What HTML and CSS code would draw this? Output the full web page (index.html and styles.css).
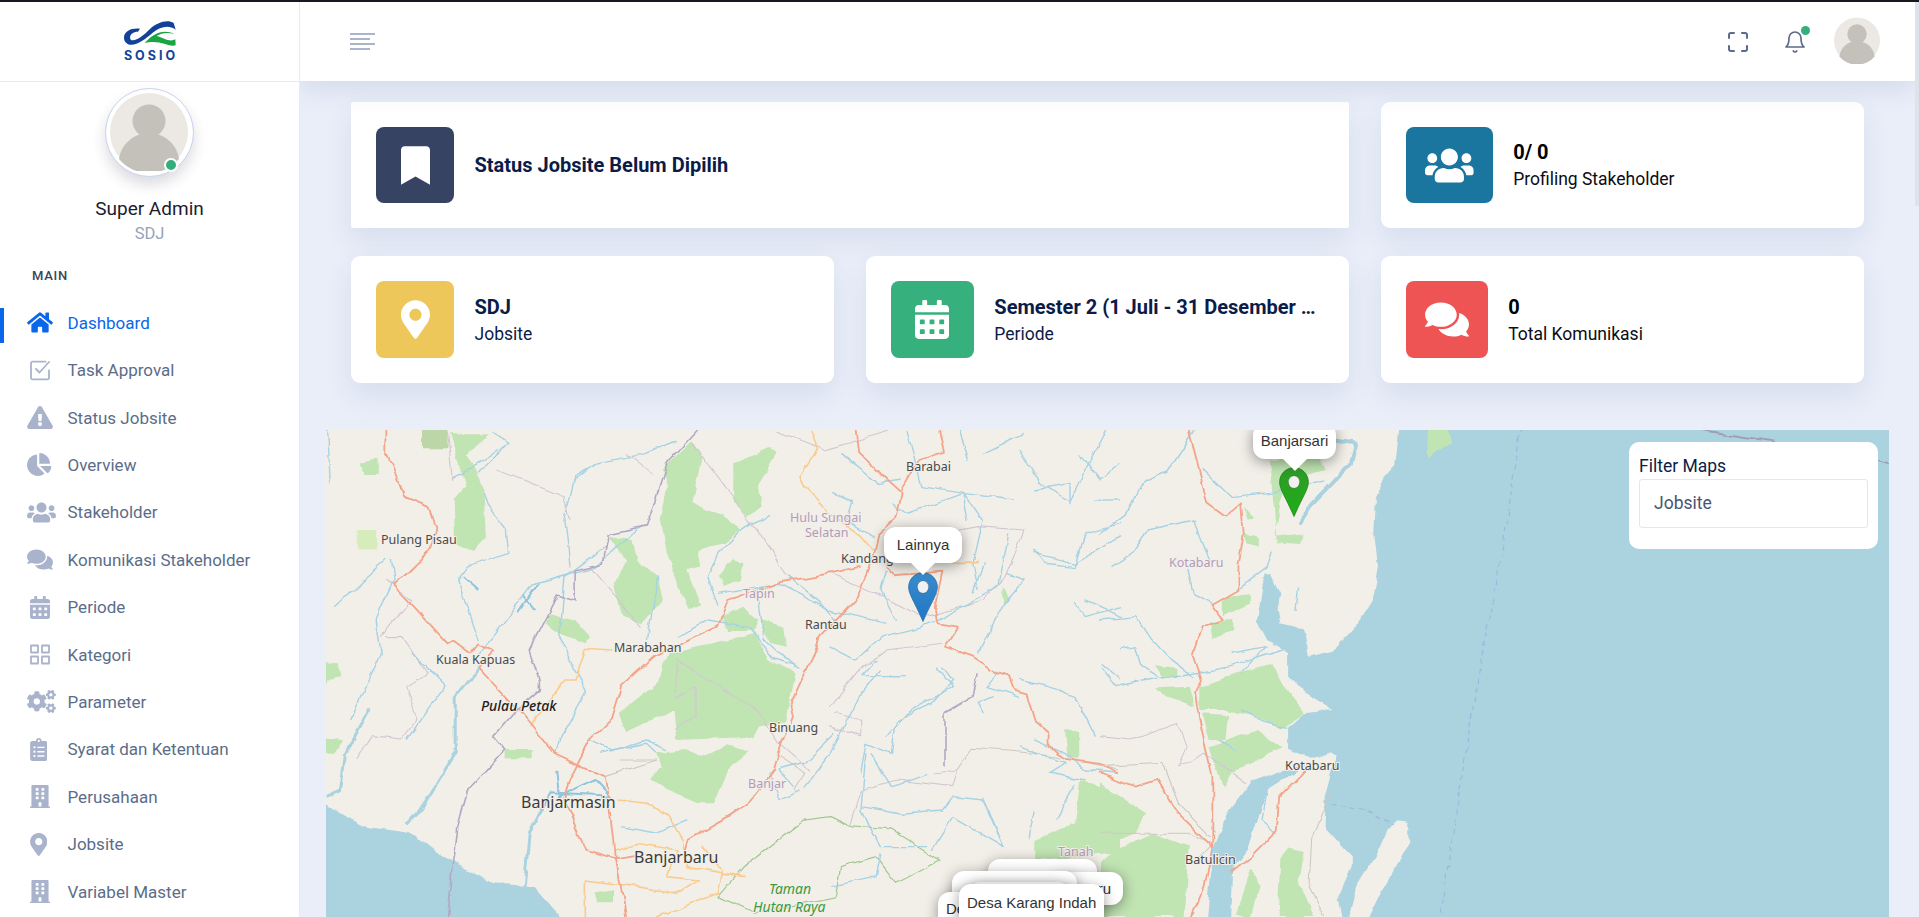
FILE: index.html
```html
<!DOCTYPE html>
<html lang="id">
<head>
<meta charset="utf-8">
<title>SOSIO Dashboard</title>
<link rel="stylesheet" href="styles.css">
</head>
<body>
<svg class="defs" width="0" height="0" aria-hidden="true">
  <defs>
    <symbol id="i-home" viewBox="0 0 576 512"><path d="M280.37 148.26L96 300.11V464a16 16 0 0 0 16 16l112.06-.29a16 16 0 0 0 15.92-16V368a16 16 0 0 1 16-16h64a16 16 0 0 1 16 16v95.64a16 16 0 0 0 16 16.05L464 480a16 16 0 0 0 16-16V300L295.67 148.26a12.19 12.19 0 0 0-15.3 0zM571.6 251.47L488 182.56V44.05a12 12 0 0 0-12-12h-56a12 12 0 0 0-12 12v72.61L318.47 43a48 48 0 0 0-61 0L4.34 251.47a12 12 0 0 0-1.6 16.9l25.5 31A12 12 0 0 0 45.15 301l235.22-193.74a12.19 12.19 0 0 1 15.3 0L530.9 301a12 12 0 0 0 16.9-1.6l25.5-31a12 12 0 0 0-1.7-16.93z"/></symbol>
    <symbol id="i-warn" viewBox="0 0 576 512"><path d="M569.517 440.013C587.975 472.007 564.806 512 527.94 512H48.054c-36.937 0-59.999-40.055-41.577-71.987L246.423 23.985c18.467-32.009 64.72-31.951 83.154 0l239.94 416.028zM288 354c-25.405 0-46 20.595-46 46s20.595 46 46 46 46-20.595 46-46-20.595-46-46-46zm-43.673-165.346l7.418 136c.347 6.364 5.609 11.346 11.982 11.346h48.546c6.373 0 11.635-4.982 11.982-11.346l7.418-136c.375-6.874-5.098-12.654-11.982-12.654h-63.383c-6.884 0-12.356 5.78-11.981 12.654z"/></symbol>
    <symbol id="i-pie" viewBox="0 0 544 512"><path d="M527.79 288H290.5l158.03 158.03c6.04 6.04 15.98 6.53 22.19.68 38.7-36.46 65.32-85.61 73.13-140.86 1.34-9.46-6.51-17.85-16.06-17.85zm-15.83-64.8C503.72 103.74 408.26 8.28 288.8.04 279.68-.59 272 7.1 272 16.24V240h223.77c9.14 0 16.82-7.68 16.19-16.8zM224 288V50.71c0-9.55-8.39-17.4-17.84-16.06C86.99 51.49-4.1 155.6.14 280.37 4.5 408.51 114.83 513.59 243.03 511.98c50.4-.63 96.97-16.87 135.26-44.03 7.9-5.6 8.42-17.23 1.57-24.08L224 288z"/></symbol>
    <symbol id="i-users" viewBox="0 0 640 512"><path d="M96 224c35.3 0 64-28.7 64-64s-28.7-64-64-64-64 28.7-64 64 28.7 64 64 64zm448 0c35.3 0 64-28.7 64-64s-28.7-64-64-64-64 28.7-64 64 28.7 64 64 64zm32 32h-64c-17.6 0-33.5 7.1-45.1 18.6 40.3 22.1 68.9 62 75.1 109.4h66c17.7 0 32-14.3 32-32v-32c0-35.3-28.7-64-64-64zm-256 0c61.9 0 112-50.1 112-112S381.9 32 320 32 208 82.1 208 144s50.1 112 112 112zm76.8 32h-8.3c-20.8 10-43.9 16-68.5 16s-47.6-6-68.5-16h-8.3C179.6 288 128 339.6 128 403.2V432c0 26.5 21.5 48 48 48h288c26.5 0 48-21.5 48-48v-28.8c0-63.6-51.6-115.2-115.2-115.2zm-223.7-13.4C161.5 263.1 145.6 256 128 256H64c-35.3 0-64 28.7-64 64v32c0 17.7 14.3 32 32 32h65.9c6.3-47.4 34.9-87.3 75.2-109.4z"/></symbol>
    <symbol id="i-chat" viewBox="0 0 576 512"><path d="M416 192c0-88.4-93.1-160-208-160S0 103.6 0 192c0 34.3 14.1 65.9 38 92-13.4 30.2-35.5 54.2-35.8 54.5-2.2 2.3-2.8 5.7-1.5 8.7S4.8 352 8 352c36.6 0 66.9-12.3 88.7-25 32.2 15.7 70.3 25 111.3 25 114.9 0 208-71.6 208-160zm122 220c23.9-26 38-57.7 38-92 0-66.9-53.5-124.2-129.3-148.1.9 6.6 1.3 13.3 1.3 20.1 0 105.9-107.7 192-240 192-10.8 0-21.3-.8-31.7-1.9C207.8 439.6 281.8 480 368 480c41 0 79.1-9.2 111.3-25 21.8 12.7 52.1 25 88.7 25 3.2 0 6.1-1.9 7.3-4.8 1.3-2.9.7-6.3-1.5-8.7-.3-.3-22.4-24.2-35.8-54.5z"/></symbol>
    <symbol id="i-cal" viewBox="0 0 448 512"><path d="M0 464c0 26.5 21.5 48 48 48h352c26.5 0 48-21.5 48-48V192H0v272zm320-196c0-6.6 5.4-12 12-12h40c6.6 0 12 5.4 12 12v40c0 6.6-5.4 12-12 12h-40c-6.6 0-12-5.4-12-12v-40zm0 128c0-6.6 5.4-12 12-12h40c6.6 0 12 5.4 12 12v40c0 6.6-5.4 12-12 12h-40c-6.6 0-12-5.4-12-12v-40zM192 268c0-6.6 5.4-12 12-12h40c6.6 0 12 5.4 12 12v40c0 6.6-5.4 12-12 12h-40c-6.6 0-12-5.4-12-12v-40zm0 128c0-6.6 5.4-12 12-12h40c6.6 0 12 5.4 12 12v40c0 6.6-5.4 12-12 12h-40c-6.6 0-12-5.4-12-12v-40zM64 268c0-6.6 5.4-12 12-12h40c6.6 0 12 5.4 12 12v40c0 6.6-5.4 12-12 12H76c-6.6 0-12-5.4-12-12v-40zm0 128c0-6.6 5.4-12 12-12h40c6.6 0 12 5.4 12 12v40c0 6.6-5.4 12-12 12H76c-6.6 0-12-5.4-12-12v-40zM400 64h-48V16c0-8.8-7.2-16-16-16h-32c-8.8 0-16 7.2-16 16v48H160V16c0-8.8-7.2-16-16-16h-32c-8.8 0-16 7.2-16 16v48H48C21.5 64 0 85.5 0 112v48h448v-48c0-26.5-21.5-48-48-48z"/></symbol>
    <symbol id="i-pin" viewBox="0 0 384 512"><path d="M172.268 501.67C26.97 291.031 0 268.413 0 192 0 85.961 85.961 0 192 0s192 85.961 192 192c0 76.413-26.97 99.031-172.268 309.67-9.535 13.774-29.93 13.773-39.464 0zM192 272c44.183 0 80-35.817 80-80s-35.817-80-80-80-80 35.817-80 80 35.817 80 80 80z"/></symbol>
    <symbol id="i-cogs" viewBox="0 0 640 512"><path d="M512.1 191l-8.2 14.3c-3 5.3-9.4 7.5-15.1 5.4-11.8-4.4-22.6-10.7-32.1-18.6-4.6-3.8-5.8-10.5-2.8-15.7l8.2-14.3c-6.9-8-12.3-17.3-15.9-27.4h-16.5c-6 0-11.2-4.3-12.2-10.3-2-12-2.1-24.6 0-37.1 1-6 6.2-10.4 12.2-10.4h16.5c3.6-10.1 9-19.4 15.9-27.4l-8.2-14.3c-3-5.2-1.9-11.9 2.8-15.7 9.5-7.9 20.4-14.2 32.1-18.6 5.7-2.1 12.1.1 15.1 5.4l8.2 14.3c10.5-1.9 21.2-1.9 31.7 0L552 6.3c3-5.3 9.4-7.5 15.1-5.4 11.8 4.4 22.6 10.7 32.1 18.6 4.6 3.8 5.8 10.5 2.8 15.7l-8.2 14.3c6.9 8 12.3 17.3 15.9 27.4h16.5c6 0 11.2 4.3 12.2 10.3 2 12 2.1 24.6 0 37.1-1 6-6.2 10.4-12.2 10.4h-16.5c-3.6 10.1-9 19.4-15.9 27.4l8.2 14.3c3 5.2 1.9 11.9-2.8 15.7-9.5 7.9-20.4 14.2-32.1 18.6-5.7 2.1-12.1-.1-15.1-5.4l-8.2-14.3c-10.4 1.9-21.2 1.9-31.7 0zm-10.5-58.8c38.5 29.6 82.4-14.3 52.8-52.8-38.5-29.7-82.4 14.3-52.8 52.8zM386.3 286.1l33.7 16.8c10.1 5.8 14.5 18.1 10.5 29.1-8.9 24.2-26.4 46.4-42.6 65.8-7.4 8.9-20.2 11.1-30.3 5.3l-29.1-16.8c-16 13.7-34.6 24.6-54.9 31.7v33.6c0 11.6-8.3 21.6-19.7 23.6-24.6 4.2-50.4 4.4-75.9 0-11.5-2-20-11.9-20-23.6V418c-20.3-7.2-38.9-18-54.9-31.7L74 403c-10 5.8-22.9 3.6-30.3-5.3-16.2-19.4-33.3-41.6-42.2-65.7-4-10.9.4-23.2 10.5-29.1l33.3-16.8c-3.9-20.9-3.9-42.4 0-63.4L12 205.8c-10.1-5.8-14.6-18.1-10.5-29 8.9-24.2 26-46.4 42.2-65.8 7.4-8.9 20.2-11.1 30.3-5.3l29.1 16.8c16-13.7 34.6-24.6 54.9-31.7V57.1c0-11.5 8.2-21.5 19.6-23.5 24.6-4.2 50.5-4.4 76-.1 11.5 2 20 11.9 20 23.6v33.6c20.3 7.2 38.9 18 54.9 31.7l29.1-16.8c10-5.8 22.9-3.6 30.3 5.3 16.2 19.4 33.2 41.6 42.1 65.8 4 10.9.1 23.2-10 29.1l-33.7 16.8c3.9 21 3.9 42.5 0 63.5zm-117.6 21.1c59.2-77-28.7-164.9-105.7-105.7-59.2 77 28.7 164.9 105.7 105.7zm243.4 182.7l-8.2 14.3c-3 5.3-9.4 7.5-15.1 5.4-11.8-4.4-22.6-10.7-32.1-18.6-4.6-3.8-5.8-10.5-2.8-15.7l8.2-14.3c-6.9-8-12.3-17.3-15.9-27.4h-16.5c-6 0-11.2-4.3-12.2-10.3-2-12-2.1-24.6 0-37.1 1-6 6.2-10.4 12.2-10.4h16.5c3.6-10.1 9-19.4 15.9-27.4l-8.2-14.3c-3-5.2-1.9-11.9 2.8-15.7 9.5-7.9 20.4-14.2 32.1-18.6 5.7-2.1 12.1.1 15.1 5.4l8.2 14.3c10.5-1.9 21.2-1.9 31.7 0l8.2-14.3c3-5.3 9.4-7.5 15.1-5.4 11.8 4.4 22.6 10.7 32.1 18.6 4.6 3.8 5.8 10.5 2.8 15.7l-8.2 14.3c6.9 8 12.3 17.3 15.9 27.4h16.5c6 0 11.2 4.3 12.2 10.3 2 12 2.1 24.6 0 37.1-1 6-6.2 10.4-12.2 10.4h-16.5c-3.6 10.1-9 19.4-15.9 27.4l8.2 14.3c3 5.2 1.9 11.9-2.8 15.7-9.5 7.9-20.4 14.2-32.1 18.6-5.7 2.1-12.1-.1-15.1-5.4l-8.2-14.3c-10.4 1.9-21.2 1.9-31.7 0zM501.6 431c38.5 29.6 82.4-14.3 52.8-52.8-38.5-29.6-82.4 14.3-52.8 52.8z"/></symbol>
    <symbol id="i-clip" viewBox="0 0 384 512"><path d="M336 64h-80c0-35.3-28.7-64-64-64s-64 28.7-64 64H48C21.5 64 0 85.5 0 112v352c0 26.5 21.5 48 48 48h288c26.5 0 48-21.5 48-48V112c0-26.5-21.5-48-48-48zM96 424c-13.3 0-24-10.7-24-24s10.7-24 24-24 24 10.7 24 24-10.7 24-24 24zm0-96c-13.3 0-24-10.7-24-24s10.7-24 24-24 24 10.7 24 24-10.7 24-24 24zm0-96c-13.3 0-24-10.7-24-24s10.7-24 24-24 24 10.7 24 24-10.7 24-24 24zm96-192c13.3 0 24 10.7 24 24s-10.7 24-24 24-24-10.7-24-24 10.7-24 24-24zm128 368c0 4.4-3.6 8-8 8H168c-4.4 0-8-3.6-8-8v-16c0-4.4 3.6-8 8-8h144c4.4 0 8 3.6 8 8v16zm0-96c0 4.4-3.6 8-8 8H168c-4.4 0-8-3.6-8-8v-16c0-4.4 3.6-8 8-8h144c4.4 0 8 3.6 8 8v16zm0-96c0 4.4-3.6 8-8 8H168c-4.4 0-8-3.6-8-8v-16c0-4.4 3.6-8 8-8h144c4.4 0 8 3.6 8 8v16z"/></symbol>
    <symbol id="i-bld" viewBox="0 0 448 512"><path d="M436 480h-20V24c0-13.255-10.745-24-24-24H56C42.745 0 32 10.745 32 24v456H12c-6.627 0-12 5.373-12 12v20h448v-20c0-6.627-5.373-12-12-12zM128 76c0-6.627 5.373-12 12-12h40c6.627 0 12 5.373 12 12v40c0 6.627-5.373 12-12 12h-40c-6.627 0-12-5.373-12-12V76zm0 96c0-6.627 5.373-12 12-12h40c6.627 0 12 5.373 12 12v40c0 6.627-5.373 12-12 12h-40c-6.627 0-12-5.373-12-12v-40zm52 148h-40c-6.627 0-12-5.373-12-12v-40c0-6.627 5.373-12 12-12h40c6.627 0 12 5.373 12 12v40c0 6.627-5.373 12-12 12zm76 160h-64v-84c0-6.627 5.373-12 12-12h40c6.627 0 12 5.373 12 12v84zm64-172c0 6.627-5.373 12-12 12h-40c-6.627 0-12-5.373-12-12v-40c0-6.627 5.373-12 12-12h40c6.627 0 12 5.373 12 12v40zm0-96c0 6.627-5.373 12-12 12h-40c-6.627 0-12-5.373-12-12v-40c0-6.627 5.373-12 12-12h40c6.627 0 12 5.373 12 12v40zm0-96c0 6.627-5.373 12-12 12h-40c-6.627 0-12-5.373-12-12V76c0-6.627 5.373-12 12-12h40c6.627 0 12 5.373 12 12v40z"/></symbol>
    <symbol id="i-mark" viewBox="0 0 384 512"><path d="M0 512V48C0 21.49 21.49 0 48 0h288c26.51 0 48 21.49 48 48v464L192 400 0 512z"/></symbol>
    <symbol id="i-user" viewBox="0 0 78 78"><circle cx="39" cy="39" r="39" fill="#ece9e4"/><circle cx="39" cy="28" r="16.5" fill="#c4c1bb"/><path d="M9 66c2-15 15-26 30-26s28 11 30 26a39 39 0 0 1-60 0z" fill="#c4c1bb"/></symbol>
    <linearGradient id="g-blue" x1="0" y1="0" x2="0" y2="1"><stop offset="0" stop-color="#3a8ccb"/><stop offset="1" stop-color="#2076c4"/></linearGradient>
    <linearGradient id="g-green" x1="0" y1="0" x2="0" y2="1"><stop offset="0" stop-color="#2e9c28"/><stop offset="1" stop-color="#1fae17"/></linearGradient>
    <filter id="organic" x="0" y="0" width="100%" height="100%" color-interpolation-filters="sRGB">
      <feTurbulence type="fractalNoise" baseFrequency=".045" numOctaves="3" seed="4" result="n"/>
      <feDisplacementMap in="SourceGraphic" in2="n" scale="7" xChannelSelector="R" yChannelSelector="G" result="d"/>
      <feGaussianBlur in="d" stdDeviation=".45"/>
    </filter>
  </defs>
</svg>

<div class="app">
  <aside class="sidebar">
    <div class="brand">
      <div class="logo">
        <svg class="logo-mark" viewBox="372 62 156 75">
          <path class="logo-blue" d="M372 112C372 92 395 82 420 85L414 94C396 94 386 106 392 118C405 126 430 106 450 86C470 67 502 56 521 68L527 88C505 72 480 80 460 96C435 118 410 136 390 133C378 131 372 122 372 112Z"/>
          <path class="logo-green" d="M434 128C458 100 490 84 524 101C500 95 484 98 470 107C490 112 510 127 526 117L527 135C505 141 480 116 434 128Z"/>
        </svg>
        <span class="logo-text">SOSIO</span>
      </div>
    </div>
    <div class="profile">
      <div class="profile-pic">
        <svg class="profile-img"><use href="#i-user"/></svg>
        <span class="profile-dot"></span>
      </div>
      <div class="profile-name">Super Admin</div>
      <div class="profile-role">SDJ</div>
    </div>
    <div class="nav-title">MAIN</div>
    <nav class="nav">
      <a class="nav-item is-active"><span class="nav-icon"><svg class="w26"><use href="#i-home"/></svg></span>Dashboard</a>
      <a class="nav-item"><span class="nav-icon"><svg class="w20 inset" viewBox="0 0 20 20"><path class="outline" d="M15.5 1.2H2.6A1.6 1.6 0 0 0 1 2.8v14.4a1.6 1.6 0 0 0 1.6 1.6h14.8a1.6 1.6 0 0 0 1.6-1.6V10"/><path class="outline" d="M6 8.5l3.5 3.5L19 1.5"/></svg></span>Task Approval</a>
      <a class="nav-item"><span class="nav-icon"><svg class="w26"><use href="#i-warn"/></svg></span>Status Jobsite</a>
      <a class="nav-item"><span class="nav-icon"><svg class="w24"><use href="#i-pie"/></svg></span>Overview</a>
      <a class="nav-item"><span class="nav-icon"><svg class="w29"><use href="#i-users"/></svg></span>Stakeholder</a>
      <a class="nav-item"><span class="nav-icon"><svg class="w26"><use href="#i-chat"/></svg></span>Komunikasi Stakeholder</a>
      <a class="nav-item"><span class="nav-icon"><svg class="w20 inset"><use href="#i-cal"/></svg></span>Periode</a>
      <a class="nav-item"><span class="nav-icon"><svg class="w20 inset" viewBox="0 0 20 20"><path class="outline" d="M1 1h7v7H1zM12 1h7v7h-7zM1 12h7v7H1zM12 12h7v7h-7z"/></svg></span>Kategori</a>
      <a class="nav-item"><span class="nav-icon"><svg class="w29"><use href="#i-cogs"/></svg></span>Parameter</a>
      <a class="nav-item"><span class="nav-icon"><svg class="w18 inset"><use href="#i-clip"/></svg></span>Syarat dan Ketentuan</a>
      <a class="nav-item"><span class="nav-icon"><svg class="w20 inset"><use href="#i-bld"/></svg></span>Perusahaan</a>
      <a class="nav-item"><span class="nav-icon"><svg class="w18 inset"><use href="#i-pin"/></svg></span>Jobsite</a>
      <a class="nav-item"><span class="nav-icon"><svg class="w20 inset"><use href="#i-bld"/></svg></span>Variabel Master</a>
    </nav>
  </aside>

  <main class="main">
    <header class="header">
      <div class="burger"><i class="long"></i><i></i><i class="long"></i><i></i></div>
      <div class="header-actions">
        <svg class="h-full" viewBox="0 0 20 20"><path d="M1 6V3a2 2 0 0 1 2-2h3M14 1h3a2 2 0 0 1 2 2v3M19 14v3a2 2 0 0 1-2 2h-3M6 19H3a2 2 0 0 1-2-2v-3"/></svg>
        <div class="h-bell">
          <svg viewBox="0 0 24 24"><path d="M18 8A6 6 0 0 0 6 8c0 7-3 9-3 9h18s-3-2-3-9"/><path d="M13.7 21a2 2 0 0 1-3.4 0"/></svg>
          <span class="h-dot"></span>
        </div>
        <svg class="h-avatar"><use href="#i-user"/></svg>
      </div>
    </header>

    <div class="content">
      <section class="cards">
        <div class="card card-wide">
          <div class="tile tile-navy"><svg class="glyph g29"><use href="#i-mark"/></svg></div>
          <div class="card-text"><div class="card-title navy">Status Jobsite Belum Dipilih</div></div>
        </div>
        <div class="card">
          <div class="tile tile-teal"><svg class="glyph g48"><use href="#i-users"/></svg></div>
          <div class="card-text"><div class="card-title">0/ 0</div><div class="card-sub">Profiling Stakeholder</div></div>
        </div>
        <div class="card">
          <div class="tile tile-yellow"><svg class="glyph g29"><use href="#i-pin"/></svg></div>
          <div class="card-text"><div class="card-title navy">SDJ</div><div class="card-sub navy">Jobsite</div></div>
        </div>
        <div class="card">
          <div class="tile tile-green"><svg class="glyph g34"><use href="#i-cal"/></svg></div>
          <div class="card-text"><div class="card-title navy">Semester 2 (1 Juli - 31 Desember 2024)</div><div class="card-sub navy">Periode</div></div>
        </div>
        <div class="card">
          <div class="tile tile-red"><svg class="glyph g44"><use href="#i-chat"/></svg></div>
          <div class="card-text"><div class="card-title">0</div><div class="card-sub">Total Komunikasi</div></div>
        </div>
      </section>

      <section class="map">
        <svg class="map-art" viewBox="326 430 1564 487" preserveAspectRatio="none">
          <rect class="land" x="326" y="430" width="1564" height="487"/>
          <g class="soft">
            <g transform="translate(320 420) scale(.5102 .3333)">
              <path class="sea" d="M-20 1135L90 1220L180 1240L230 1300L340 1390L420 1400L500 1540L-20 1540Z"/>
              <g class="forest">
                <path d="M255 40L330 40L290 110L320 200L325 350L300 390L265 370L262 240L285 200Z"/>
                <path class="tile-dark" d="M200 30H250V85H200Z"/>
                <path d="M80 125L115 115V165H85Z"/>
                <path class="pale" d="M72 330H110V385H72Z"/>
                <path d="M0 725L35 730L40 770L0 800Z"/>
                <path d="M0 955L45 960L30 1000L0 1010Z"/>
                <path d="M730 60L750 110L730 250L790 290L825 330L790 370L740 390L745 440L720 450L745 560L725 570L700 480L680 400L668 300L680 200L670 150Z"/>
                <path d="M880 80L895 100L860 190L865 260L840 290L810 240L810 130Z"/>
                <path d="M565 350L610 360L620 420L660 470L670 540L630 610L590 580L575 500L600 420Z"/>
                <path d="M810 420L830 430L825 480L790 500L780 470Z"/>
                <path d="M450 580L500 600L530 650L520 670L470 640L440 610Z"/>
                <path d="M785 590L830 560L860 600L850 630L800 630Z"/>
                <path d="M865 600L910 620L915 680L885 670L865 630Z"/>
                <path d="M690 700L850 640L880 720L930 760L925 800L910 900L860 920L850 950L700 960L695 870L600 940L585 880L660 790L670 730Z"/>
                <path d="M660 1000L720 990L750 1010L800 970L840 990L800 1040L790 1080L770 1150L740 1150L680 1110L645 1080L670 1040Z"/>
                <path d="M360 990H415V1015H360Z"/>
                <path d="M1490 1080L1568 1130V1300L1400 1320V1260L1480 1210Z"/>
                <path d="M1460 925L1490 940V1020L1465 1015Z"/>
                <path d="M1340 500L1350 530L1338 560Z"/>
                <path d="M540 1420L575 1410L570 1450L545 1450Z"/>
              </g>
              <g class="boundary">
                <path d="M350 150L480 230L490 300"/><path d="M530 440L630 620"/><path d="M700 720L850 860L900 970L960 1050"/>
                <path d="M730 70L890 400L915 470"/><path d="M700 730V830L735 800V890L695 930"/>
                <path d="M890 30L990 90L1120 30"/><path d="M1000 460L1090 520L1180 590L1300 540L1340 480L1380 330L1290 320L1220 340"/>
                <path d="M130 650L160 650L210 760L170 800L190 900L160 960L100 950L70 1020"/><path d="M1000 860L1050 760L1110 690L1220 670"/>
                <path d="M1010 880L1060 900L1060 950L1000 920"/><path d="M600 100L650 160"/><path d="M1200 1060L1250 1050L1240 1100L1130 1080L1060 1110L1040 1220"/>
                <path d="M250 40L260 180"/><path d="M120 650L180 540L130 480"/>
              </g>
              <g class="greyroad">
                <path d="M1250 1050L1280 985L1400 1000L1568 1050"/><path d="M900 1010L950 1060L930 1110"/><path d="M590 1020L660 1020L560 1070"/>
              </g>
              <g class="park"><path d="M830 1340L950 1200L1000 1190L1040 1220L1120 1230L1215 1320L1130 1390L1090 1310L1020 1340L1010 1430L850 1480L780 1430L830 1340"/></g>
              <g class="river">
                <path d="M340 40L370 70L310 160"/><path d="M320 220L330 260L365 330L370 400L290 440L270 480L300 620L310 660"/>
                <path d="M140 420L145 480L130 530L110 600L120 700L60 900"/><path d="M490 460L420 490L340 650L300 720"/>
                <path d="M500 180L540 130L640 100L700 60"/><path d="M560 380L480 470L470 650L520 820L470 950L460 1000"/>
                <path d="M1000 680L1050 720L1100 650L1180 620L1210 600L1330 500L1350 340"/><path d="M1110 450L1100 510L1130 600"/>
                <path d="M1500 540L1568 590"/><path d="M1010 210L1040 250L1030 300L1085 350"/><path d="M1260 220L1360 240"/><path d="M1370 90L1410 190L1470 240L1540 30"/>
                <path d="M1070 1000L1060 1170L1100 1280L1190 1280"/><path d="M1100 750L1060 820L1000 1000L950 1100"/>
                <path d="M1150 30L1180 200L1260 220L1300 300L1280 430L1290 510"/><path d="M1400 400L1480 430L1568 350"/><path d="M1210 740L1240 800L1150 880L1110 950"/>
                <path d="M1530 730L1568 780"/><path d="M1320 830L1290 850L1300 880"/><path d="M1370 980L1460 1030L1430 1060L1500 1080"/>
                <path d="M1120 770L1150 770"/><path d="M550 1000L640 960L680 990"/><path d="M700 650L760 600L840 620L890 720L940 745"/>
                <path d="M780 520L900 490L1000 570L1110 610"/><path d="M1300 1130L1340 1280L1240 1190L1200 1290"/><path d="M1400 1170L1390 1250"/>
                <path d="M15 30L20 190"/><path d="M540 130L500 170L480 300L490 440"/><path d="M630 320L540 440L420 490"/><path d="M660 470L640 660"/>
                <path d="M880 280L820 340L780 400L760 470L780 560"/><path d="M920 470L990 560L1030 630"/><path d="M860 540L870 660L930 745"/>
                <path d="M1120 250L1150 280L1260 220L1270 300"/><path d="M1300 430L1280 520"/><path d="M1400 210L1470 190L1470 250"/>
                <path d="M1400 390L1420 430L1480 440L1500 340L1568 310"/><path d="M1290 700L1340 550L1380 480L1345 460"/><path d="M1480 550L1500 590L1568 560"/>
                <path d="M1090 720L1060 770L1140 770"/><path d="M1220 740L1240 780L1200 850L1130 900L1120 1000L1070 970L1060 1060"/>
                <path d="M1060 1160L1140 1180L1220 1170L1240 1130L1300 1140L1340 1280"/><path d="M1400 960L1460 1000L1500 1050L1568 1060"/>
                <path d="M1100 1300L1090 1370L1000 1400"/><path d="M1330 760L1310 800L1370 830"/><path d="M1520 950L1480 830L1430 800L1370 780"/>
                <path d="M530 960L570 990L640 970L660 1000"/><path d="M930 1100L900 1050L950 1030L1010 940"/><path d="M590 1220L660 1240L720 1200"/>
                <path d="M1270 120L1250 30"/><path d="M1300 100L1380 40"/><path d="M1490 100L1530 180L1568 130"/><path d="M1020 100L1095 190L1140 180"/>
                <path d="M880 1060L900 1140L940 1110"/><path d="M1520 240L1568 240"/><path d="M1440 1200L1480 1090"/><path d="M30 560L85 480L130 420"/>
                <path d="M180 700L245 800L170 960"/><path d="M350 90L300 140L260 170"/><path d="M1190 1060L1120 1100L1080 1000"/>
              </g>
              <path class="river-wide" d="M100 860L50 1000L40 1110L10 1130"/>
              <path class="river-wide" d="M310 740L265 830L265 1000L190 1180L170 1215"/>
              <path class="river-wide" d="M440 1150L410 1240L400 1400L370 1491"/>
              <path class="river-dense" d="M465 1050L470 1130L540 1080L570 1130L450 1120L430 1170"/>
              <path class="river-dense" d="M390 580L430 490M400 530L420 570M280 470L310 510"/>
              <path class="border-river" d="M740 30L680 130L640 320L565 345L555 430L500 450L500 540L465 525L440 600L410 690L430 780L430 810L385 870L340 950L360 990L290 1110L270 1220L250 1491"/>
              <path class="border-river" d="M1290 760L1280 830L1225 880L1225 1040"/>
              <g class="minor">
                <path d="M960 30L975 90L940 170L950 200L1000 280L1060 345L1085 390"/><path d="M520 685L575 690"/><path d="M520 685L500 780L480 780L410 920"/>
                <path d="M585 1140L640 1150L680 1180L710 1260L720 1340L830 1370"/><path d="M580 1290L620 1270L700 1290L680 1370L740 1380L700 1420L620 1400L520 1380L520 1491"/>
                <path d="M750 1280L790 1350L780 1420L660 1491"/><path d="M1225 430L1290 425"/>
              </g>
              <g class="road">
                <path d="M130 30V100L150 170L165 230L215 262L230 330L215 390L145 495L250 670L260 660L295 700L310 670L340 695L310 740L390 870L460 1000L560 1070L570 1170L580 1315"/>
                <path d="M1050 30L1055 100L1090 150L1140 220L1130 290L1095 340L1085 410L1050 540L980 650L965 710L920 860L925 890L905 970L890 1050L840 1150L800 1190L720 1260L715 1290"/>
                <path d="M1215 30L1225 95L1175 120L1140 215"/>
                <path d="M1110 440L1130 465L1220 455L1205 560L1210 610L1250 620L1225 680L1280 710L1330 760L1350 770L1360 810L1385 820L1400 900L1430 940L1430 980L1460 1020L1530 1035L1568 1060"/>
                <path d="M1060 440L1000 460L890 490L800 540L780 620L710 670L655 710L590 800L570 900L530 960L490 1080L480 1140L520 1290L580 1315L620 1305"/>
                <path d="M580 1315L600 1491"/>
              </g>
            </g>
            <g transform="translate(1100 420) scale(.5225 .3333)">
              <path class="sea" d="M575 0L565 135L545 170L528 240L525 340L532 440L520 545L490 620L450 690L400 712L392 640L388 625L345 610L340 570L345 520L325 460L315 460L305 560L300 600L320 660L360 700L360 770L390 820L445 870L390 880L360 920L360 990L400 1015L440 995L455 1010L445 1040L430 1130L428 1220L480 1310L480 1350L455 1440L470 1540H1560V0Z"/>
              <path class="sea" d="M395 1030L360 1045L290 1085L245 1180L215 1285L200 1540H250L255 1345L285 1285L320 1110L370 1060Z"/>
              <path class="land" d="M565 1200L590 1205L590 1270L560 1360L530 1440L500 1540H470L490 1400L530 1300L550 1230Z"/>
              <path class="sea-line" d="M440 60L490 70L480 130L400 260L380 310"/>
              <g class="forest">
                <path d="M325 120L420 110L430 150L360 180L345 250L335 350L390 340L385 375L340 370L335 260Z"/>
                <path d="M625 20H665L670 70L630 115Z"/><path d="M275 260L295 290L285 300Z"/><path d="M275 340L300 350V380L280 370Z"/>
                <path d="M235 530L285 520V555L235 590Z"/><path d="M210 605L255 600V635L215 660Z"/><path d="M105 735L150 745V770H120Z"/>
                <path d="M190 800L240 770L330 730L365 830L390 880L350 920L300 890L240 870L190 870Z"/><path d="M105 805L170 800L180 860L130 830Z"/>
                <path d="M195 880L245 885L240 960H210Z"/><path d="M210 980L300 930L350 985L310 1010L250 1060L235 1100L215 1010Z"/>
                <path d="M0 1090L90 1180L70 1240L0 1280Z"/><path d="M30 1290L100 1240L170 1280L160 1491H0V1330Z"/>
                <path d="M360 1280L390 1290L380 1380L410 1491H340L345 1320Z"/><path d="M290 1340L305 1400L290 1491H260Z"/>
              </g>
              <g class="boundary"><path d="M0 950L60 960L150 910L165 980L150 1040L200 1000L280 1090"/></g>
              <g class="greyroad"><path d="M0 1040L120 1030L150 1150L210 1250"/><path d="M0 1240H90L170 1240L215 1270L185 1320"/><path d="M440 1120L405 1260L400 1400L430 1491"/></g>
              <g class="river">
                <path d="M180 30L130 150L85 180L50 280L0 340"/><path d="M195 145L250 230L340 215L430 180"/><path d="M0 600L70 590L100 660L130 710L180 770"/>
                <path d="M40 690L70 680L80 740L110 770"/><path d="M0 740L30 800L90 780L180 760L250 740L350 690"/><path d="M20 440L60 400L90 330L180 300L190 350L210 430"/>
                <path d="M270 870L310 900L360 920"/><path d="M170 450L180 520L215 550"/><path d="M330 390L320 440L260 510"/><path d="M380 500L375 570"/><path d="M230 960L260 1000"/>
                <path d="M250 700L320 680L270 760"/><path d="M320 1110L310 1200L340 1240"/>
              </g>
              <g class="road">
                <path d="M170 30L190 150L205 250L240 290L270 250L275 340L265 440L265 510L215 555L235 600L195 620L178 700L195 780L182 820L190 900L215 1070L215 1280L200 1400L175 1491"/>
                <path d="M0 1060L70 1100L110 1080L150 1180L215 1280"/><path d="M395 1050L345 1130L340 1230L290 1310L250 1360"/>
              </g>
              <path class="dash" d="M805 0L780 300L720 800L650 1491"/>
              <path class="dash" d="M445 1150L510 1170L560 1215"/>
              <path class="border-line" d="M1150 30L1290 65M1490 120L1512 130"/>
            </g>
          </g>
          <g class="labels">
            <text class="lb" x="381" y="544">Pulang Pisau</text>
            <text class="lb" x="436" y="664">Kuala Kapuas</text>
            <text class="lb lb-it" x="481" y="711">Pulau Petak</text>
            <text class="lb" x="614" y="652">Marabahan</text>
            <text class="lb" x="805" y="629">Rantau</text>
            <text class="lb" x="769" y="732">Binuang</text>
            <text class="lb lb-big" x="521" y="808">Banjarmasin</text>
            <text class="lb lb-big" x="634" y="863">Banjarbaru</text>
            <text class="lb" x="841" y="563">Kandangan</text>
            <text class="lb" x="906" y="471">Barabai</text>
            <text class="lb lb-ad" x="790" y="522">Hulu Sungai</text>
            <text class="lb lb-ad" x="805" y="537">Selatan</text>
            <text class="lb lb-ad" x="743" y="598">Tapin</text>
            <text class="lb lb-ad" x="748" y="788">Banjar</text>
            <text class="lb lb-ad" x="1058" y="856">Tanah</text>
            <text class="lb lb-ad" x="1169" y="567">Kotabaru</text>
            <text class="lb" x="1285" y="770">Kotabaru</text>
            <text class="lb" x="1185" y="864">Batulicin</text>
            <text class="lb lb-park" x="769" y="894">Taman</text>
            <text class="lb lb-park" x="753" y="912">Hutan Raya</text>
          </g>
        </svg>

        <svg class="pin pin-blue" viewBox="0 0 30 50"><path d="M15 .6C7 .6 .6 7.2 .6 15C.6 22 5 27 15 49.5C25 27 29.4 22 29.4 15C29.4 7.2 23 .6 15 .6Z"/><ellipse class="pin-eye" cx="15" cy="15" rx="5.6" ry="6.2"/></svg>
        <svg class="pin pin-green" viewBox="0 0 30 50"><path d="M15 .6C7 .6 .6 7.2 .6 15C.6 22 5 27 15 49.5C25 27 29.4 22 29.4 15C29.4 7.2 23 .6 15 .6Z"/><ellipse class="pin-eye" cx="15" cy="15" rx="5.6" ry="6.2"/></svg>

        <div class="pop pop-banjarsari">Banjarsari</div>
        <div class="pop pop-lainnya">Lainnya</div>
        <div class="pop pop-a">&nbsp;</div>
        <div class="pop pop-b">Desa Batu Baru</div>
        <div class="pop pop-c">Desa Pantai</div>
        <div class="pop pop-d">&nbsp;</div>
        <div class="pop pop-e">Desa Sungai</div>
        <div class="pop pop-f">Desa Karang Indah</div>

        <div class="filter">
          <label class="filter-label">Filter Maps</label>
          <div class="filter-input">Jobsite</div>
        </div>
      </section>
    </div>
  </main>
  <div class="scrollbar"><span class="thumb"></span></div>
</div>
</body>
</html>
```
FILE: styles.css
```css
* { box-sizing: border-box; }
html, body { margin: 0; height: 100%; overflow: hidden; }
body { font-family: Roboto, "Liberation Sans", sans-serif; background: #e9eef9; color: #0b1c48; }
.defs { position: absolute; }

.app { display: flex; height: 917px; border-top: 2px solid #17171f; overflow: hidden; }

/* sidebar */
.sidebar { width: 300px; flex: none; background: #fff; border-right: 1px solid #e8eaf1; overflow: hidden; position: relative; z-index: 3; }
.brand { height: 80px; border-bottom: 1px solid #e8eaf1; display: flex; justify-content: center; align-items: flex-start; padding-top: 19px; }
.logo { width: 52px; display: flex; flex-direction: column; align-items: center; }
.logo-mark { width: 52px; height: 25px; display: block; }
.logo-blue { fill: #12419a; }
.logo-green { fill: #1aa442; }
.logo-text { font: 700 12.5px/12px Inter, "Liberation Sans", sans-serif; letter-spacing: 3px; color: #12419a; margin: 4px -3px 0 0; }

.profile { display: flex; flex-direction: column; align-items: center; padding-top: 6px; }
.profile-pic { width: 89px; height: 89px; border-radius: 50%; border: 1.5px solid #c7d2ec; background: #fff; padding: 4px; position: relative; box-shadow: 0 8px 14px rgba(40, 40, 60, .16); }
.profile-img { width: 78px; height: 78px; display: block; }
.profile-dot { position: absolute; left: 58px; top: 69px; width: 14px; height: 14px; border-radius: 50%; background: #34ae7c; border: 2px solid #fff; }
.profile-name { font-size: 19px; line-height: 24px; color: #1c1c2e; margin-top: 20px; }
.profile-role { font-size: 16.5px; line-height: 20px; color: #98a2b8; margin-top: 3px; }
.nav-title { font-size: 13px; line-height: 16px; font-weight: 500; letter-spacing: .7px; color: #3c4459; padding-left: 32px; margin-top: 24px; }

.nav { margin-top: 15px; }
.nav-item { height: 47.42px; display: flex; align-items: center; position: relative; font-size: 17px; color: #5b6d8a; }
.nav-item.is-active { color: #0a66ea; }
.nav-item.is-active::before { content: ""; position: absolute; left: 0; top: 8.5px; width: 4px; height: 35px; background: #0a66ea; }
.nav-icon { width: 67.5px; flex: none; padding-left: 27px; display: flex; align-items: center; color: #a9b3cb; }
.nav-item.is-active .nav-icon { color: #0a66ea; }
.nav-icon svg { height: 23px; display: block; fill: currentColor; }
.w18 { width: 17.5px; } .w20 { width: 20px; } .w24 { width: 24.5px; } .w26 { width: 26px; } .w29 { width: 29px; }
.inset { margin-left: 2.5px; }
.outline { fill: none; stroke: currentColor; stroke-width: 1.8; stroke-linecap: round; stroke-linejoin: round; }

/* main */
.main { flex: 1; min-width: 0; display: flex; flex-direction: column; overflow: hidden; }
.header { height: 79px; flex: none; background: #fff; display: flex; align-items: center; justify-content: space-between; padding: 0 35px 0 50px; position: relative; z-index: 2; box-shadow: 0 8px 24px rgba(60, 80, 130, .12); }
.burger { width: 25px; display: flex; flex-direction: column; gap: 3.3px; margin-top: 6px; transform: translateY(-3px); }
.burger i { display: block; height: 2px; width: 20px; background: #aab4cf; }
.burger i.long { width: 25px; }
.header-actions { display: flex; align-items: center; }
.h-full { width: 20px; height: 20px; fill: none; stroke: #5b6b88; stroke-width: 2; stroke-linecap: round; margin-right: 35px; margin-top: 1px; }
.h-bell { position: relative; width: 24px; height: 26px; margin-right: 27px; }
.h-bell svg { width: 24px; height: 26px; display: block; fill: none; stroke: #5b6b88; stroke-width: 1.7; stroke-linecap: round; stroke-linejoin: round; }
.h-dot { position: absolute; right: -3px; top: -3px; width: 9px; height: 9px; border-radius: 50%; background: #34ae7c; }
.h-avatar { width: 46px; height: 47px; display: block; margin-top: -2px; }

.content { flex: 1; min-height: 0; padding: 21px 26px 0; display: flex; flex-direction: column; }
.cards { display: grid; grid-template-columns: repeat(3, 483.33px); grid-template-rows: 126px 127px; gap: 28px 31.5px; margin: 0 25px; }
.card { background: #fff; border-radius: 9px; padding: 25px; display: flex; align-items: center; min-width: 0; box-shadow: 0 12px 28px rgba(60, 80, 130, .1); }
.card-wide { grid-column: span 2; border-radius: 2px; }
.tile { flex: none; height: 76px; border-radius: 8px; display: flex; align-items: center; justify-content: center; color: #fff; }
.card:nth-child(n+3) .tile { height: 77px; }
.tile-navy { width: 78px; background: #364362; }
.tile-teal { width: 87px; background: #1a769e; }
.tile-yellow { width: 78px; background: #edc759; }
.tile-green { width: 83px; background: #36b07c; }
.tile-red { width: 82px; background: #ef5454; }
.glyph { height: 39px; display: block; fill: currentColor; }
.g29 { width: 29px; } .g34 { width: 34px; } .g44 { width: 44px; } .g48 { width: 48.75px; }
.card-text { margin-left: 20.5px; min-width: 0; flex: 1; }
.card-title { font-size: 20px; line-height: 24px; font-weight: 700; color: #000; white-space: nowrap; overflow: hidden; text-overflow: ellipsis; }
.card-sub { font-size: 17.5px; line-height: 22px; font-weight: 400; color: #0c0c14; margin-top: 4px; }
.navy { color: #0b1c48; }

/* map */
.map { flex: 1; min-height: 0; margin-top: 47px; position: relative; overflow: hidden; }
.map-art { position: absolute; left: 0; top: 0; width: 1564px; height: 487px; display: block; }
.land { fill: #f2efe9; }
.sea { fill: #aad3df; }
.sea-line { fill: none; stroke: #aad3df; stroke-width: 4; vector-effect: non-scaling-stroke; }
.soft { filter: url(#organic); }
.forest path { fill: #c0e4b2; }
.forest path.tile-dark { fill: #bcd6a8; }
.forest path.pale { fill: #d6edbb; }
.river path, .river-wide, .river-dense, .road path, .minor path, .boundary path, .greyroad path, .park path, .border-river, .dash, .border-line { fill: none; vector-effect: non-scaling-stroke; stroke-linejoin: round; }
.river path { stroke: #a6d2e4; stroke-width: 1.4; }
.river-wide { stroke: #aad3df; stroke-width: 3; }
.river-dense { stroke: #8dc6e0; stroke-width: 2; }
.road path { stroke: #f3a489; stroke-width: 1.8; }
.minor path { stroke: #f9cc8e; stroke-width: 1.6; }
.boundary path { stroke: #d3c6d2; stroke-width: 1.1; }
.greyroad path { stroke: #ccc9c2; stroke-width: 1.1; }
.park path { stroke: #a3c992; stroke-width: 1.3; }
.border-river { stroke: #b2a8c4; stroke-width: 1.6; }
.dash { stroke: #a0b6dd; stroke-width: 1.2; stroke-dasharray: 5 4; }
.border-line { stroke: #a09cb8; stroke-width: 1.8; }
.lb { font: 400 12.5px "Noto Sans", "Open Sans", sans-serif; fill: #4a4a4a; stroke: #f2efe9; stroke-width: 2px; paint-order: stroke; }
.lb-it { font-style: italic; font-weight: 500; font-size: 14px; fill: #222; }
.lb-big { font-size: 16px; fill: #3c3c3c; }
.lb-ad { fill: #b29bba; }
.lb-park { font-style: italic; fill: #3d9a3d; font-size: 14px; }

.pin { position: absolute; width: 30px; height: 50px; display: block; }
.pin-blue { left: 582px; top: 142px; }
.pin-green { left: 953px; top: 37px; }
.pin-blue path { fill: url(#g-blue); stroke: #2a6da3; stroke-width: .7; }
.pin-green path { fill: url(#g-green); stroke: #1d7a18; stroke-width: .7; }
.pin-eye { fill: #f1f1f1; stroke: rgba(0, 0, 0, .25); stroke-width: .8; }

.pop { position: absolute; height: 36px; padding: 0 11px; background: #fff; border-radius: 12px; font: 400 15px/36px "Liberation Sans", Arial, sans-serif; color: #333; white-space: nowrap; box-shadow: 0 3px 14px rgba(0, 0, 0, .4); }
.pop-lainnya { left: 558px; top: 97px; width: 78px; text-align: center; padding: 0; }
.pop-lainnya::after, .pop-banjarsari::after { content: ""; position: absolute; left: 50%; top: 100%; margin-left: -12px; border: 12px solid transparent; border-bottom: 0; border-top-color: #fff; }
.pop-banjarsari { left: 927px; top: -7px; width: 83px; text-align: center; padding: 0; }
.pop-a { left: 662px; top: 429px; width: 109px; }
.pop-b { left: 730px; top: 442px; width: 67px; height: 33px; line-height: 33px; direction: rtl; overflow: hidden; padding: 0 12px 0 0; text-align: right; }
.pop-c { left: 626px; top: 441px; width: 125px; line-height: 92px; height: 60px; padding-left: 8px; overflow: hidden; }
.pop-d { left: 642px; top: 452px; width: 102px; }
.pop-e { left: 612px; top: 462px; width: 130px; line-height: 34px; padding-left: 8px; overflow: hidden; }
.pop-f { left: 633px; top: 454px; width: 145px; height: 50px; padding: 0 8px; line-height: 38px; }

.filter { position: absolute; left: 1303px; top: 12px; width: 249px; height: 107px; background: #fff; border-radius: 10px; padding: 14px 10px 0; }
.filter-label { display: block; font-size: 17.5px; line-height: 20px; color: #0b1c48; }
.filter-input { height: 49px; margin-top: 3px; border: 1px solid #e3e6f1; border-radius: 3px; padding: 0 14px; font-size: 17.5px; line-height: 47px; color: #48546f; }

.scrollbar { width: 4px; flex: none; background: #e9eef9; }
.thumb { display: block; height: 204px; background: #dee2ea; }
```
